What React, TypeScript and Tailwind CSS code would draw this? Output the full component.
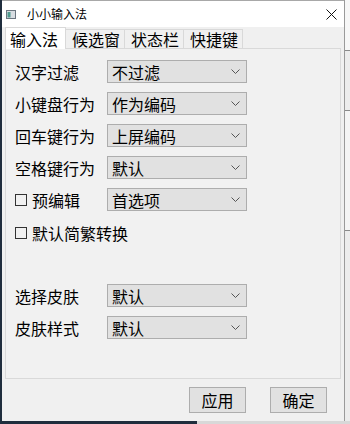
import { FC } from "react";

const font = { fontFamily: '"Noto Sans CJK SC", "Noto Sans", sans-serif' };

const Chevron: FC = () => (
  <svg width="9" height="5" viewBox="0 0 9 5" className="shrink-0">
    <path d="M0.5 0.5 L4.5 4.5 L8.5 0.5" fill="none" stroke="#555" strokeWidth="1" />
  </svg>
);

const Combo: FC<{ value: string }> = ({ value }) => (
  <div className="w-[140px] h-[23px] border border-[#adadad] bg-[#e1e1e1] flex items-center justify-between pl-[4px] pr-[6px]">
    <span className="text-[16px] leading-none text-black">{value}</span>
    <Chevron />
  </div>
);

const Row: FC<{ label: string; value: string; check?: boolean }> = ({ label, value, check }) => (
  <div className="flex items-center h-[23px]">
    <div className="w-[92px] flex items-center text-[16px] leading-none text-black">
      {check && <span className="w-[12px] h-[12px] border border-[#333] mr-[5px] shrink-0" />}
      {label}
    </div>
    <Combo value={value} />
  </div>
);

const tabs = ["候选窗", "状态栏", "快捷键"];

export default function App() {
  return (
    <div className="w-[350px] h-[424px] flex flex-col overflow-hidden bg-[#1f2d3d]" style={font}>
      <div className="flex h-[421px]">
        <div className="w-[2px] bg-[#1f2d3d]" />
        <div className="w-[342px] flex flex-col bg-[#f0f0f0] border-t border-[#a8a8a8]">
          {/* title bar */}
          <div className="h-[26px] bg-white flex items-center pl-[4px] pr-[7px]">
            <svg width="10" height="9" viewBox="0 0 10 9" className="shrink-0">
              <rect x="0.5" y="0.5" width="9" height="8" fill="#d8dde2" stroke="#6b7580" />
              <rect x="1.5" y="2" width="3" height="5.5" fill="#4f9a8f" />
            </svg>
            <span className="ml-[11px] text-[12px] leading-none text-black">小小输入法</span>
            <svg width="11" height="11" viewBox="0 0 11 11" className="ml-auto">
              <path d="M0.5 0.5 L10.5 10.5 M10.5 0.5 L0.5 10.5" stroke="#111" strokeWidth="1" />
            </svg>
          </div>
          {/* tabs */}
          <div className="h-[21px] flex items-end pl-[3px]">
            <div className="relative z-10 w-[61px] h-[22px] -mb-px bg-white border border-b-0 border-[#d9d9d9] flex items-center pl-[4px] text-[16px] leading-none text-black">
              输入法
            </div>
            {tabs.map((t) => (
              <div
                key={t}
                className="w-[59px] h-[19px] border border-l-0 border-b-0 border-[#d9d9d9] bg-[#f0f0f0] flex items-center pl-[6px] text-[16px] leading-none text-black"
              >
                {t}
              </div>
            ))}
          </div>
          {/* pane */}
          <div className="mx-[3px] h-[331px] border border-[#d9d9d9] bg-[#f1f1f1] pt-[11px] pl-[9px] flex flex-col gap-[9px]">
            <Row label="汉字过滤" value="不过滤" />
            <Row label="小键盘行为" value="作为编码" />
            <Row label="回车键行为" value="上屏编码" />
            <Row label="空格键行为" value="默认" />
            <Row label="预编辑" value="首选项" check />
            <div className="flex items-center h-[23px] pt-[2px] text-[16px] leading-none text-black">
              <span className="w-[12px] h-[12px] border border-[#333] mr-[5px] shrink-0" />
              默认简繁转换
            </div>
            <div className="mt-[32px]">
              <Row label="选择皮肤" value="默认" />
            </div>
            <Row label="皮肤样式" value="默认" />
          </div>
          {/* buttons */}
          <div className="flex justify-end gap-[24px] pr-[17px] pt-[8px]">
            <button className="w-[57px] h-[26px] border border-[#adadad] bg-[#e1e1e1] text-[16px] leading-none text-black">
              应用
            </button>
            <button className="w-[57px] h-[26px] border border-[#adadad] bg-[#e1e1e1] text-[16px] leading-none text-black">
              确定
            </button>
          </div>
        </div>
        <div className="flex-1 bg-[#ececec] border-l border-[#9a9a9a] flex flex-col">
          <div className="h-[50px] bg-[#f7f7f7]" />
          <div className="h-[60px] border-t border-[#8a8a8a]" />
          <div className="h-[120px] border-t border-[#8a8a8a] bg-[#f5f5f5]" />
          <div className="flex-1 border-t border-[#8a8a8a]" />
        </div>
      </div>
      <div className="h-[3px] flex">
        <div className="w-[197px] bg-[#1f2d3d]" />
        <div className="flex-1 bg-[#d8d8d8]" />
      </div>
    </div>
  );
}
